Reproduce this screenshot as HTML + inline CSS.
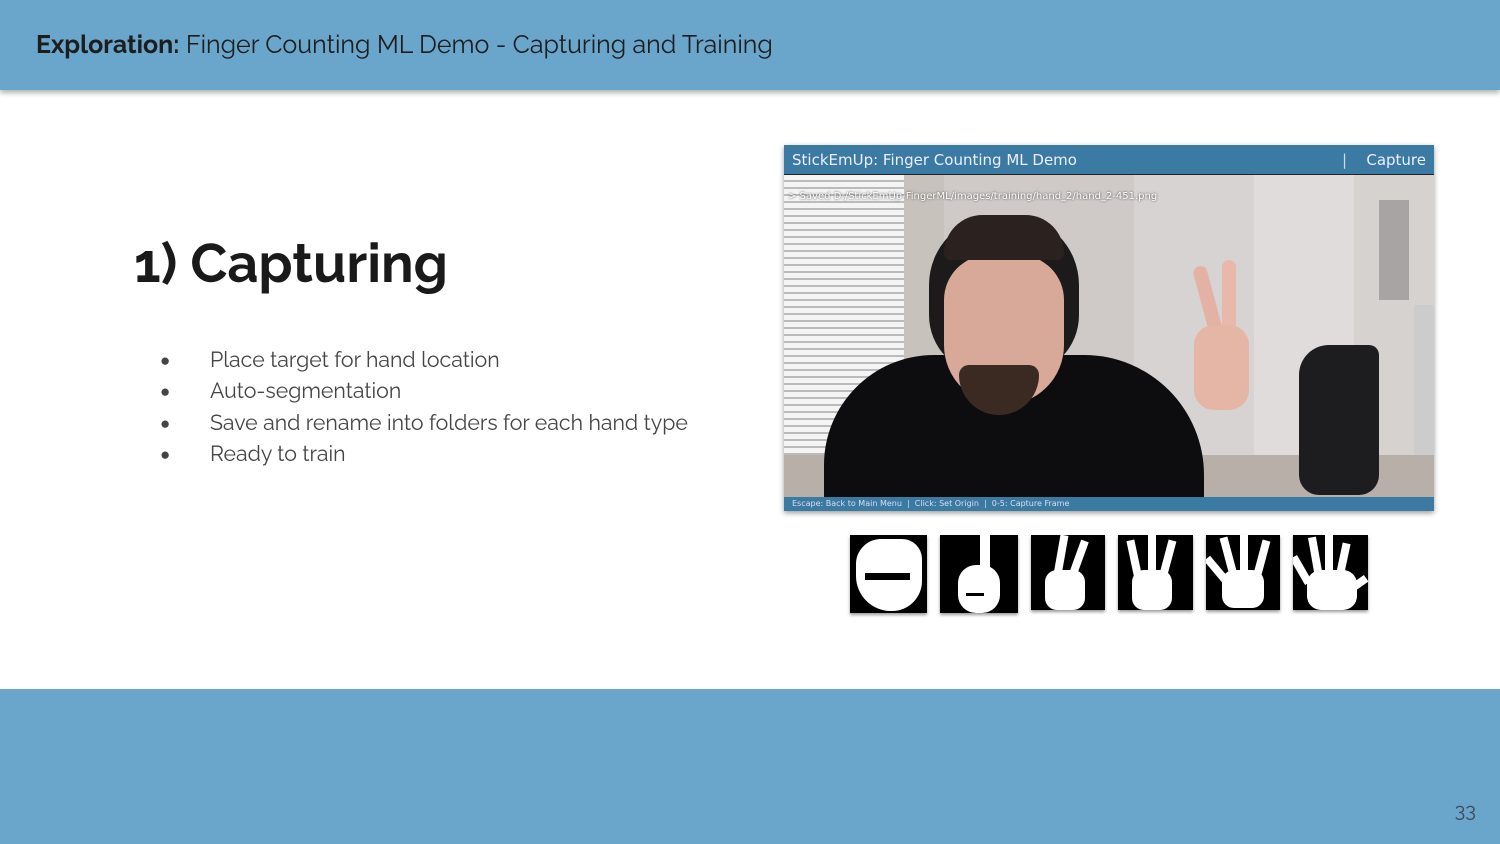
<!DOCTYPE html>
<html><head><meta charset="utf-8"><style>
*{margin:0;padding:0;box-sizing:border-box}
body{width:1500px;height:844px;background:#fff;position:relative;overflow:hidden;font-family:"Raleway","Liberation Sans",sans-serif}
.hdr{position:absolute;left:0;top:0;width:1500px;height:90px;background:#6aa5cb;box-shadow:0 3px 5px rgba(0,0,0,.3)}
.hdr div{position:absolute;left:36px;top:29px;font-size:25px;color:#1d1d1d}
.ftr{position:absolute;left:0;top:689px;width:1500px;height:155px;background:#6aa5cb}
.pg{position:absolute;right:24px;top:798px;font-size:20px;color:#3d4a55}
h1{position:absolute;left:134px;top:231px;font-size:54px;font-weight:bold;color:#1a1a1a}
ul{position:absolute;left:160px;top:347px;list-style:none;font-size:21.3px;color:#444}
li{height:31.3px;position:relative;padding-left:50px}
li:before{content:"●";position:absolute;left:0;font-size:17px;top:3px}
.win{position:absolute;left:784px;top:145px;width:650px;height:366px;box-shadow:0 2px 5px rgba(0,0,0,.4);background:#3a7aa3;overflow:hidden}
.tb{position:absolute;left:0;top:0;width:650px;height:30px;background:#3a7aa3;color:#eef;font-family:"DejaVu Sans",sans-serif;font-size:15px;line-height:30px;padding-left:8px;border-bottom:1px solid #222}
.bb{position:absolute;left:0;top:352px;width:650px;height:14px;color:#dde;font-family:"DejaVu Sans",sans-serif;font-size:8px;line-height:14px;padding-left:8px}
.ph{position:absolute;left:0;top:30px;width:650px;height:322px;background:#d6d2d0;overflow:hidden}
.ph div{position:absolute}
.h{position:absolute;top:535px;background:#000;box-shadow:0 2px 3px rgba(0,0,0,.4);overflow:hidden}
.h div{position:absolute;background:#fff}
</style></head><body>
<div class="hdr"><div><b>Exploration:</b> Finger Counting ML Demo - Capturing and Training</div></div>
<h1>1) Capturing</h1>
<ul><li>Place target for hand location</li><li>Auto-segmentation</li><li>Save and rename into folders for each hand type</li><li>Ready to train</li></ul>
<div class="win">
<div class="tb">StickEmUp: Finger Counting ML Demo<span style="position:absolute;left:558px;color:#cde">|</span><span style="position:absolute;right:8px">Capture</span></div>
<div class="ph">
<div style="left:0;top:0;width:120px;height:322px;background:repeating-linear-gradient(#f4f4f4 0 5px,#bbb 5px 7px)"></div>
<div style="left:120px;top:0;width:40px;height:322px;background:#c8c2bc"></div>
<div style="left:160px;top:0;width:190px;height:322px;background:#cfcac8"></div>
<div style="left:350px;top:0;width:120px;height:322px;background:#d7d3d2"></div>
<div style="left:470px;top:0;width:100px;height:322px;background:#e0dcdb"></div>
<div style="left:595px;top:25px;width:30px;height:100px;background:#a8a4a4"></div>
<div style="left:630px;top:130px;width:20px;height:170px;background:#ccc"></div>
<div style="left:0;top:280px;width:650px;height:42px;background:#b8afa8"></div>
<div style="left:515px;top:170px;width:80px;height:150px;background:#1d1d20;border-radius:30px 10px 20px 20px"></div>
<div style="left:40px;top:180px;width:380px;height:150px;background:#0d0d10;border-radius:110px 120px 0 0"></div>
<div style="left:145px;top:40px;width:150px;height:160px;background:#1c1a1a;border-radius:70px 70px 60px 60px"></div>
<div style="left:160px;top:80px;width:120px;height:150px;background:#d8a899;border-radius:45px 45px 60px 60px"></div>
<div style="left:175px;top:190px;width:80px;height:50px;background:#3a2a22;border-radius:10px 10px 40px 40px"></div>
<div style="left:160px;top:40px;width:120px;height:45px;background:#2b2220;border-radius:60px 60px 10px 10px"></div>
<div style="left:418px;top:90px;width:14px;height:80px;background:#e3b2a5;border-radius:7px;transform:rotate(-15deg)"></div>
<div style="left:438px;top:85px;width:14px;height:80px;background:#e8b9ab;border-radius:7px"></div>
<div style="left:410px;top:150px;width:55px;height:85px;background:#e5b5a6;border-radius:20px"></div>
<div style="left:0;top:0;width:650px;text-align:left;top:16px;font-family:'DejaVu Sans',sans-serif;font-size:10px;color:#fff;text-shadow:0 0 2px #333;padding-left:4px">&gt; Saved D:/StickEmUp-FingerML/images/training/hand_2/hand_2-451.png</div>
</div>
<div class="bb">Escape: Back to Main Menu &nbsp;| &nbsp;Click: Set Origin &nbsp;| &nbsp;0-5: Capture Frame</div>
</div>
<div class="h" style="left:850px;width:77px;height:78px"><div style="left:6px;top:4px;width:66px;height:72px;border-radius:25px 20px 30px 35px"></div><div style="left:15px;top:38px;width:45px;height:7px;background:#000"></div></div>
<div class="h" style="left:940px;width:78px;height:78px"><div style="left:40px;top:0;width:10px;height:40px"></div><div style="left:18px;top:30px;width:42px;height:48px;border-radius:18px"></div><div style="left:26px;top:58px;width:18px;height:3px;background:#000"></div></div>
<div class="h" style="left:1031px;width:74px;height:75px"><div style="left:26px;top:0;width:8px;height:40px;transform:rotate(10deg)"></div><div style="left:44px;top:5px;width:8px;height:35px;transform:rotate(20deg)"></div><div style="left:14px;top:35px;width:40px;height:40px;border-radius:12px"></div></div>
<div class="h" style="left:1118px;width:75px;height:75px"><div style="left:12px;top:5px;width:8px;height:35px;transform:rotate(-12deg)"></div><div style="left:30px;top:0;width:8px;height:40px"></div><div style="left:46px;top:5px;width:8px;height:35px;transform:rotate(15deg)"></div><div style="left:14px;top:35px;width:40px;height:40px;border-radius:12px"></div></div>
<div class="h" style="left:1206px;width:74px;height:75px"><div style="left:6px;top:20px;width:8px;height:28px;transform:rotate(-40deg)"></div><div style="left:18px;top:2px;width:8px;height:35px;transform:rotate(-15deg)"></div><div style="left:34px;top:0;width:8px;height:38px"></div><div style="left:52px;top:5px;width:8px;height:35px;transform:rotate(15deg)"></div><div style="left:16px;top:35px;width:42px;height:38px;border-radius:12px"></div></div>
<div class="h" style="left:1293px;width:75px;height:75px"><div style="left:4px;top:20px;width:8px;height:30px;transform:rotate(-30deg)"></div><div style="left:18px;top:2px;width:8px;height:35px;transform:rotate(-10deg)"></div><div style="left:32px;top:0;width:8px;height:38px"></div><div style="left:46px;top:8px;width:8px;height:35px;transform:rotate(12deg)"></div><div style="left:14px;top:35px;width:50px;height:40px;border-radius:14px"></div><div style="left:55px;top:45px;width:20px;height:8px;transform:rotate(-35deg)"></div></div>
<div class="ftr"></div>
<div class="pg">33</div>
</body></html>
